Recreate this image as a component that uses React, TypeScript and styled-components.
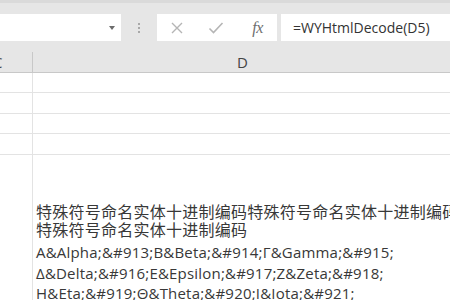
import styled, { createGlobalStyle } from "styled-components";

const GlobalStyle = createGlobalStyle`
  html, body {
    margin: 0;
    padding: 0;
    background: #ffffff;
  }
  body {
    width: 450px;
    height: 300px;
    overflow: hidden;
    font-family: "Open Sans", "Noto Sans CJK SC", sans-serif;
  }
`;

const Sheet = styled.div`
  width: 450px;
  height: 300px;
  display: flex;
  flex-direction: column;
  overflow: hidden;
  background: #ffffff;
`;

const FormulaBar = styled.div`
  height: 50px;
  flex: none;
  box-sizing: border-box;
  background: #e6e6e6;
  border-top: 3px solid #dadada;
  padding-top: 11px;
  display: flex;
  align-items: flex-start;
`;

const NameBox = styled.div`
  width: 121px;
  height: 27px;
  flex: none;
  background: #ffffff;
  display: flex;
  align-items: center;
  justify-content: flex-end;
  padding-right: 6px;
  box-sizing: border-box;
`;

const Caret = styled.span`
  width: 0;
  height: 0;
  border-left: 3.5px solid transparent;
  border-right: 3.5px solid transparent;
  border-top: 4px solid #6b6b6b;
`;

const Grip = styled.div`
  width: 36px;
  height: 27px;
  flex: none;
  display: flex;
  flex-direction: column;
  align-items: center;
  justify-content: center;
  gap: 2px;
`;

const GripDot = styled.span`
  width: 2px;
  height: 2px;
  background: #a8a8a8;
`;

const ButtonBox = styled.div`
  width: 120px;
  height: 27px;
  flex: none;
  background: #ffffff;
  display: flex;
  align-items: center;
`;

const BarButton = styled.div<{ $w: number }>`
  width: ${(p) => p.$w}px;
  height: 27px;
  display: flex;
  align-items: center;
  justify-content: center;
`;

const Fx = styled.span`
  font-family: "Liberation Serif", serif;
  font-style: italic;
  font-size: 16px;
  color: #6e6e6e;
  letter-spacing: -0.5px;
  margin-left: 3px;
`;

const FormulaInput = styled.div`
  margin-left: 4px;
  flex: 1;
  height: 27px;
  background: #ffffff;
  display: flex;
  align-items: center;
  padding-left: 12px;
  font-size: 14px;
  color: #333333;
  white-space: nowrap;
`;

const HeaderRow = styled.div`
  height: 23px;
  flex: none;
  box-sizing: border-box;
  background: #e6e6e6;
  border-bottom: 1px solid #c8c8c8;
  display: flex;
  align-items: flex-end;
`;

const ColHead = styled.div<{ $w: number; $cut?: boolean }>`
  width: ${(p) => p.$w}px;
  flex: none;
  height: 20px;
  box-sizing: border-box;
  border-right: 1px solid #c8c8c8;
  display: flex;
  align-items: center;
  justify-content: ${(p) => (p.$cut ? "flex-start" : "center")};
  font-size: 15px;
  color: #444444;
  overflow: hidden;
`;

const CutLabel = styled.span`
  margin-left: -7px;
`;

const Row = styled.div<{ $h: number }>`
  height: ${(p) => p.$h}px;
  flex: none;
  display: flex;
  box-sizing: border-box;
  border-bottom: 1px solid #e3e3e3;
`;

const TallRow = styled.div`
  flex: 1;
  display: flex;
  min-height: 0;
`;

const Cell = styled.div<{ $w: number }>`
  width: ${(p) => p.$w}px;
  flex: none;
  box-sizing: border-box;
  border-right: 1px solid #e3e3e3;
  overflow: hidden;
`;

const TextCell = styled.div`
  flex: 1;
  overflow: hidden;
  padding: 48px 0 0 3px;
  color: #383838;
  white-space: nowrap;
`;

const Line = styled.div<{ $cjk?: boolean; $gap?: boolean }>`
  font-size: ${(p) => (p.$cjk ? 16 : 15)}px;
  line-height: ${(p) => (p.$cjk ? 18 : 20.5)}px;
  letter-spacing: ${(p) => (p.$cjk ? 0.25 : 0.2)}px;
  margin-top: ${(p) => (p.$gap ? 3 : 0)}px;
`;

const CrossIcon = () => (
  <svg width="14" height="14" viewBox="0 0 14 14">
    <path d="M2 2 L12 12 M12 2 L2 12" stroke="#b5b5b5" strokeWidth="1.4" fill="none" />
  </svg>
);

const CheckIcon = () => (
  <svg width="16" height="14" viewBox="0 0 16 14">
    <path d="M1.5 7.5 L5.5 11.5 L14.5 2" stroke="#b5b5b5" strokeWidth="1.6" fill="none" />
  </svg>
);

const lines: { text: string; cjk?: boolean; gap?: boolean }[] = [
  { text: "特殊符号命名实体十进制编码特殊符号命名实体十进制编码", cjk: true },
  { text: "特殊符号命名实体十进制编码", cjk: true },
  { text: "A&Alpha;&#913;B&Beta;&#914;Γ&Gamma;&#915;", gap: true },
  { text: "Δ&Delta;&#916;E&Epsilon;&#917;Z&Zeta;&#918;" },
  { text: "H&Eta;&#919;Θ&Theta;&#920;I&Iota;&#921;" },
];

const App = () => (
  <Sheet>
    <GlobalStyle />
    <FormulaBar>
      <NameBox>
        <Caret />
      </NameBox>
      <Grip>
        <GripDot />
        <GripDot />
        <GripDot />
      </Grip>
      <ButtonBox>
        <BarButton $w={40}>
          <CrossIcon />
        </BarButton>
        <BarButton $w={38}>
          <CheckIcon />
        </BarButton>
        <BarButton $w={42}>
          <Fx>fx</Fx>
        </BarButton>
      </ButtonBox>
      <FormulaInput>=WYHtmlDecode(D5)</FormulaInput>
    </FormulaBar>
    <HeaderRow>
      <ColHead $w={33} $cut>
        <CutLabel>C</CutLabel>
      </ColHead>
      <ColHead $w={420}>D</ColHead>
    </HeaderRow>
    <Row $h={20}>
      <Cell $w={33} />
    </Row>
    <Row $h={21}>
      <Cell $w={33} />
    </Row>
    <Row $h={20}>
      <Cell $w={33} />
    </Row>
    <Row $h={21}>
      <Cell $w={33} />
    </Row>
    <TallRow>
      <Cell $w={33} />
      <TextCell>
        {lines.map((l) => (
          <Line key={l.text} $cjk={l.cjk} $gap={l.gap}>
            {l.text}
          </Line>
        ))}
      </TextCell>
    </TallRow>
  </Sheet>
);

export default App;
